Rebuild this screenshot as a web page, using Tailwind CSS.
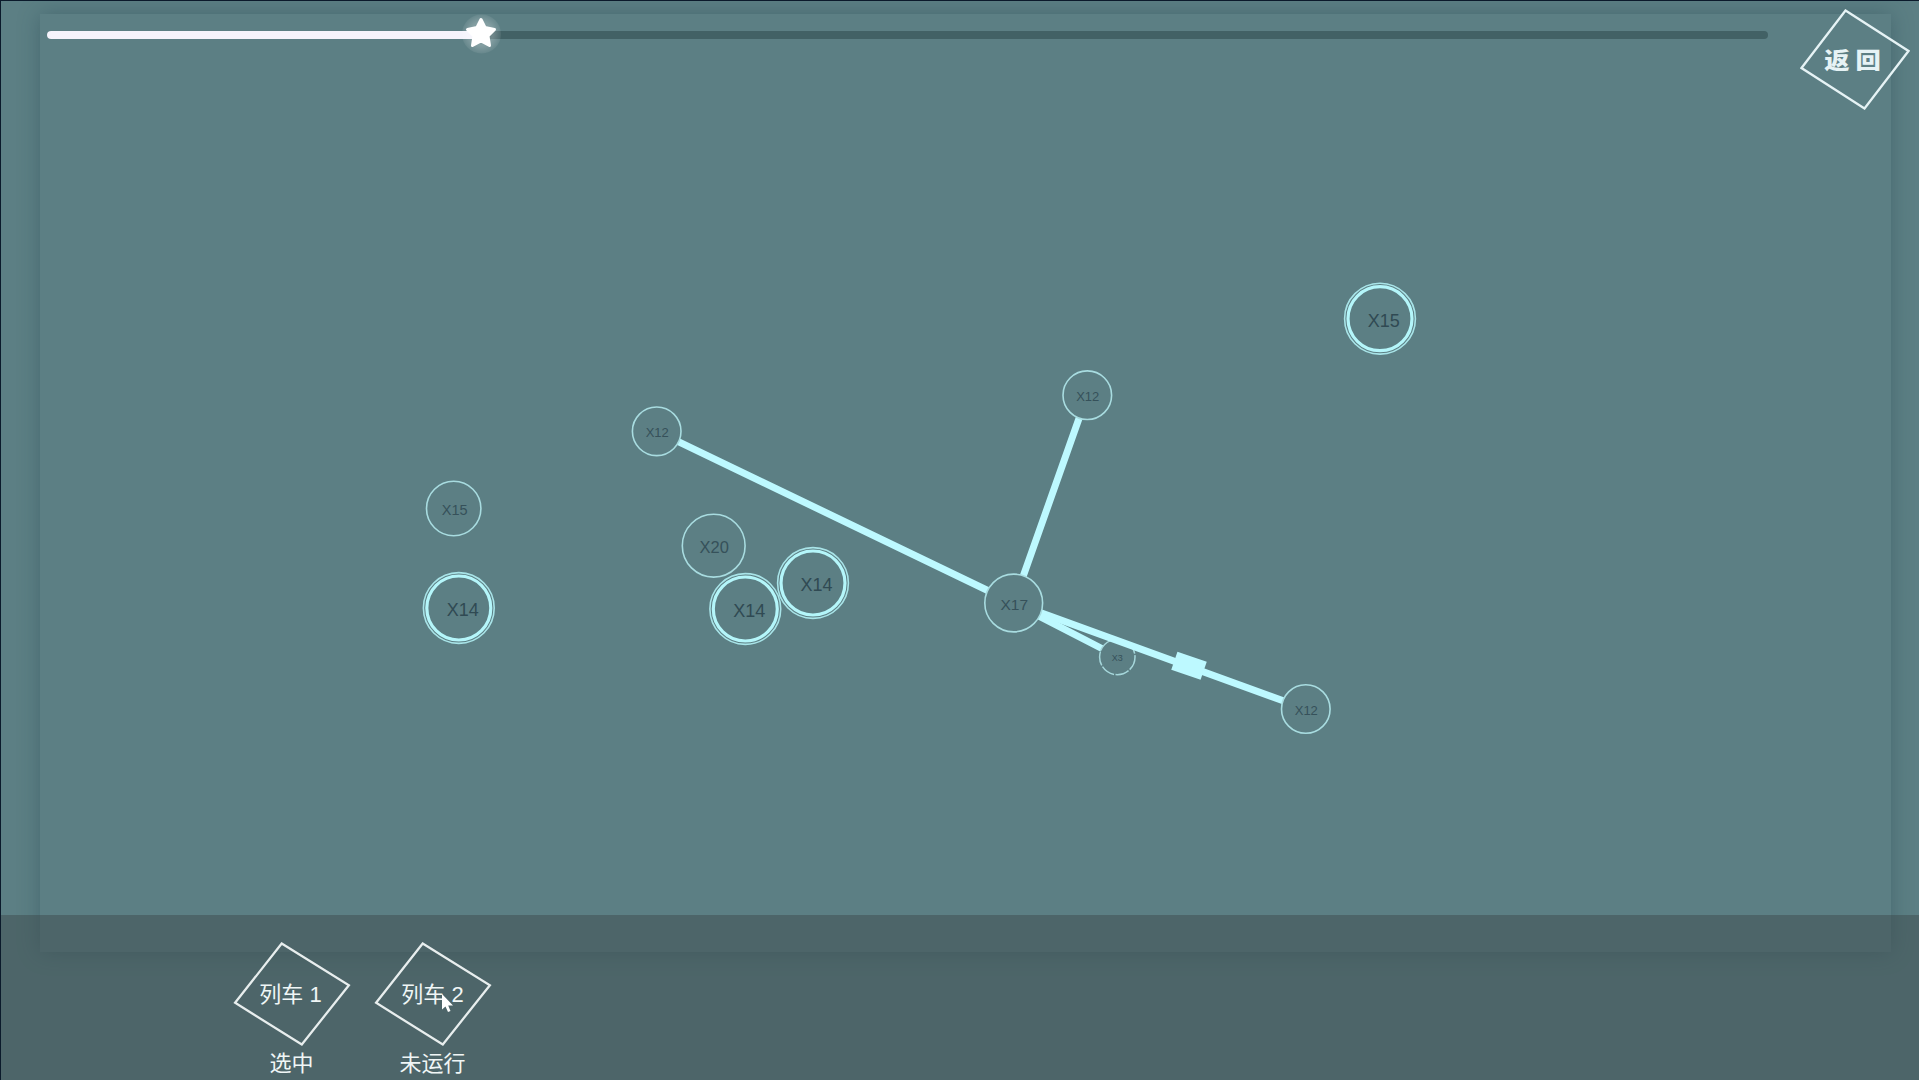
<!DOCTYPE html>
<html lang="zh-CN">
<head>
    <meta charset="UTF-8">
    <meta name="viewport" content="width=device-width, initial-scale=1.0">
    <title>列车</title>
    <script src="https://cdn.jsdelivr.net/npm/@tailwindcss/browser@4"></script>
</head>
<body class="h-screen overflow-hidden bg-[#5c7f84] font-['Liberation_Sans','Noto_Sans_CJK_SC',sans-serif]">
    <div class="relative h-full flex flex-col overflow-hidden border-t border-l border-[#0b1a2b]">
        <!-- Map panel shadow -->
        <div class="absolute left-[39px] top-[13px] w-[1851px] h-[938px] shadow-[0_0_20px_rgba(30,60,72,0.35)]"></div>

        <!-- Map -->
        <svg class="absolute -left-px -top-px w-[1919px] h-[1080px]" viewBox="0 0 1919 1080" fill="#5c7f84" text-anchor="middle">
            <g stroke="#bdf9ff" stroke-width="7">
                <path d="M657 431.3L1013.7 603M1087.3 395L1013.7 603M1013.7 603L1117.3 656.5" />
            </g>
            <circle cx="1117.3" cy="657" r="17.7" stroke="#a5d6da" stroke-width="1.5" stroke-dasharray="14 1.5" />
            <path d="M1013.7 603L1306 709" stroke="#bdf9ff" stroke-width="7" />
            <rect x="1173.5" y="656.2" width="31" height="19" fill="#bdf9ff" transform="rotate(19 1189 665.7)" />

            <!-- Small stations -->
            <g stroke="#a8dce0" stroke-width="1.6">
                <circle cx="656.7" cy="431.3" r="24.3" />
                <circle cx="453.7" cy="508.5" r="27.2" />
                <circle cx="713.7" cy="545.7" r="31.4" />
                <circle cx="1087.3" cy="395.2" r="24.3" />
                <circle cx="1013.7" cy="603" r="28.9" />
                <circle cx="1305.8" cy="709" r="24.3" />
            </g>

            <!-- Large stations -->
            <g stroke="#a8e4e8" stroke-width="1.6">
                <circle cx="458.8" cy="608" r="35.4" />
                <circle cx="745.3" cy="609" r="35.4" />
                <circle cx="813" cy="583" r="35.4" />
                <circle cx="1380" cy="318.7" r="35.4" />
            </g>
            <g stroke="#b4f6fa" stroke-width="3.2">
                <circle cx="458.8" cy="608" r="32" />
                <circle cx="745.3" cy="609" r="32" />
                <circle cx="813" cy="583" r="32" />
                <circle cx="1380" cy="318.7" r="32" />
            </g>

            <g fill="#36515a">
                <text x="657.2" y="437" font-size="13">X12</text>
                <text x="454.7" y="515" font-size="14.5">X15</text>
                <text x="714.3" y="553.3" font-size="16.5">X20</text>
                <text x="1087.7" y="401.2" font-size="13">X12</text>
                <text x="1014.3" y="610.3" font-size="15.5">X17</text>
                <text x="1117.3" y="661" font-size="9">X3</text>
                <text x="1306.3" y="715.3" font-size="13">X12</text>
            </g>
            <g fill="#304a53" font-size="18">
                <text x="462.8" y="616">X14</text>
                <text x="749.3" y="617">X14</text>
                <text x="816.5" y="591.3">X14</text>
                <text x="1383.7" y="327.3">X15</text>
            </g>
        </svg>

        <!-- Progress bar -->
        <header class="relative flex justify-between pl-[46px] pr-[9px] pt-[8px]">
            <div class="relative mt-[22px] w-[1721px] h-2 rounded-full bg-[#426165]">
                <div class="w-[434px] h-2 rounded-full bg-[#f5f4fc]"></div>
                <svg class="absolute left-[414px] -top-[17px] w-10 h-10" viewBox="0 0 40 40">
                    <defs>
                        <radialGradient id="halo">
                            <stop offset="0.6" stop-color="#fff" stop-opacity=".24" />
                            <stop offset="1" stop-color="#fff" stop-opacity=".07" />
                        </radialGradient>
                    </defs>
                    <circle cx="20.5" cy="20" r="19.5" fill="url(#halo)" />
                    <path d="M20 5.5L24 13.5L33.5 15.5L27 22L28.5 31.5L20 27L11.5 31.5L13 22L6.5 15.5L16 13.5Z" fill="#fff" stroke="#fff" stroke-width="3" stroke-linejoin="round" />
                </svg>
            </div>
            <button class="relative w-[110px] h-[101px]">
                <svg class="absolute inset-0 w-full h-full" viewBox="0 0 110 101" fill="none" stroke="#e6f3f5" stroke-width="2.3">
                    <path d="M45.5 1.5L108.5 42L64.5 99.5L1.5 59Z" />
                </svg>
                <span class="relative right-[2px] bottom-px inline-block scale-x-115 text-[22px] font-black text-[#e6f3f5] font-['Noto_Sans_CJK_SC',sans-serif]">返 回</span>
            </button>
        </header>

        <!-- Train list -->
        <footer class="relative mt-auto h-[165px] shrink-0 flex gap-[22px] pl-[231px] pt-[27px] bg-[#3e4b4d]/50 text-[#f0f6f6]">
            <div class="w-[119px] flex flex-col items-center">
                <button class="relative w-[119px] h-[106px] text-[22px]">
                    <svg class="absolute inset-0 w-full h-full" viewBox="0 0 119 106" fill="none" stroke="#e8eeee" stroke-width="2.3">
                        <path d="M49.5 1.5L118 44L70 104.5L2 62Z" />
                    </svg>
                    <span class="relative right-px">列车 1</span>
                </button>
                <p class="pt-[2px] text-[22px] leading-8">选中</p>
            </div>
            <div class="w-[119px] flex flex-col items-center">
                <button class="relative w-[119px] h-[106px] text-[22px]">
                    <svg class="absolute inset-0 w-full h-full" viewBox="0 0 119 106" fill="none" stroke="#e8eeee" stroke-width="2.3">
                        <path d="M49.5 1.5L118 44L70 104.5L2 62Z" />
                    </svg>
                    <span class="relative">列车 2</span>
                </button>
                <p class="pt-[2px] text-[22px] leading-8">未运行</p>
            </div>
        </footer>

        <!-- Pointer -->
        <svg class="absolute left-[441px] top-[993px] w-3 h-[19px]" viewBox="0 0 12 19" fill="#fff">
            <path d="M0 0L0 15.5L3.5 12.5L6 18L8.5 17L6.2 11.5H11Z" />
        </svg>
    </div>
</body>
</html>
